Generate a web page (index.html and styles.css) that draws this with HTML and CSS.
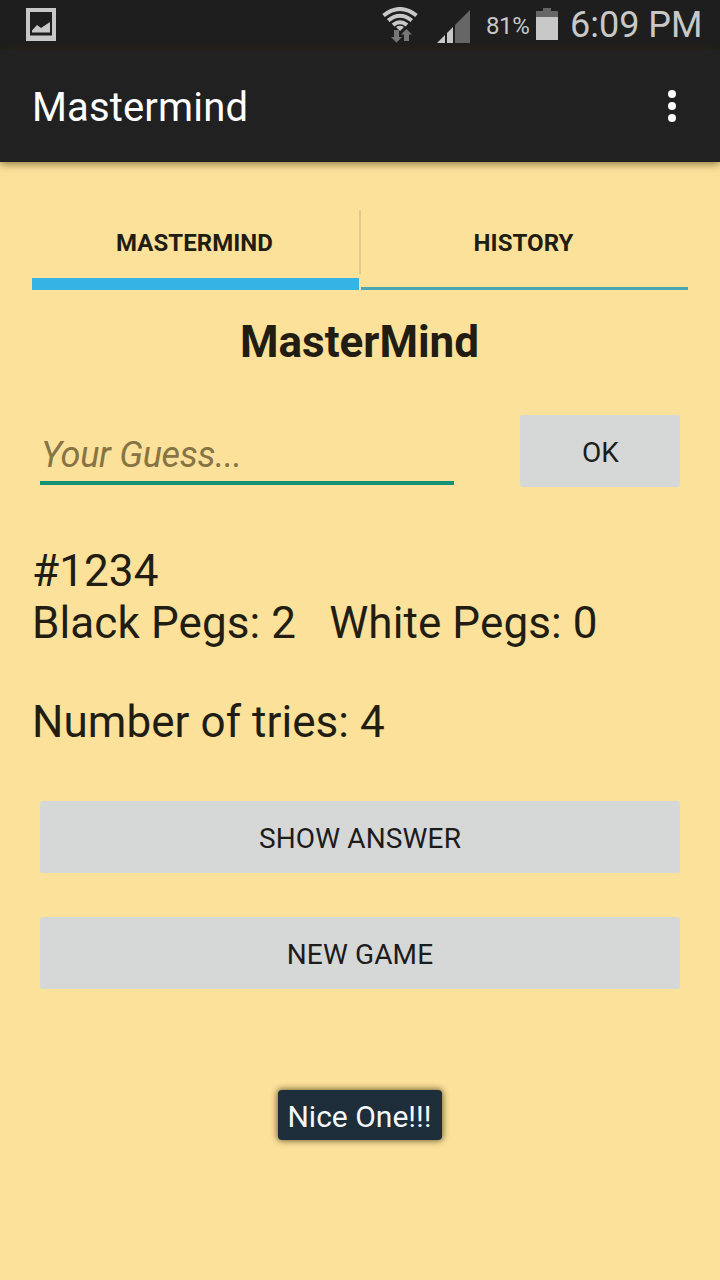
FILE: index.html
```
<!DOCTYPE html>
<html lang="en">
<head>
<meta charset="utf-8">
<title>Mastermind</title>
<link rel="stylesheet" href="styles.css">
</head>
<body>
<div class="screen">
  <div class="status-bar">
    <svg class="icon-picture" width="30" height="34" viewBox="0 0 30 34"><path fill="#c8c8c8" fill-rule="evenodd" d="M0 0H30V33H0ZM4 4V27.500H26V4Z"/><path fill="#c8c8c8" d="M6 24.500V22.500L11 17L15 20L24 14V24.500Z"/></svg>
    <svg class="icon-wifi" width="38" height="36" viewBox="0 0 38 36"><g fill="none" stroke="#c8c8c8" stroke-width="4"><path d="M2.500 8.500Q19 -4.500 35.500 8.500"/><path d="M7.200 13.500Q19 4 30.800 13.500"/><path d="M12 18Q19 12.500 26 18"/></g><path fill="#c8c8c8" d="M15 20Q19 17.500 23 20L19 24Z"/><path fill="#777" d="M13 23H18V30H21L15.500 35.500L10 30H13ZM23 34V27.500H20L25.500 22L31 27.500H28V34Z"/></svg>
    <svg class="icon-signal" width="33" height="34" viewBox="0 0 33 34"><path fill="#666" d="M18 15L33 0V33H18Z"/><path fill="#c8c8c8" d="M0 33L8 25V33ZM10 23L16 17V33H10Z"/></svg>
    <span class="battery-level">81%</span>
    <svg class="icon-battery" width="22" height="32" viewBox="0 0 22 32"><path fill="#666" d="M7 0H15V3H22V9H0V3H7Z"/><path fill="#c8c8c8" d="M0 9H22V32H0Z"/></svg>
    <span class="clock">6:09 PM</span>
  </div>
  <header class="app-bar">
    <h1 class="app-title">Mastermind</h1>
    <svg width="8" height="34" viewBox="0 0 8 34"><g fill="#fff"><circle cx="4" cy="5" r="4"/><circle cx="4" cy="17" r="4"/><circle cx="4" cy="29" r="4"/></g></svg>
  </header>
  <main class="content">
    <nav class="tabs">
      <div class="tab tab-active">MASTERMIND</div>
      <div class="tab-divider"></div>
      <div class="tab">HISTORY</div>
    </nav>
    <h2 class="game-title">MasterMind</h2>
    <div class="guess-row">
      <div class="guess-field">Your Guess...</div>
      <button class="button ok-button">OK</button>
    </div>
    <div class="result">#1234<br>Black Pegs: 2 &nbsp; White Pegs: 0</div>
    <div class="tries">Number of tries: 4</div>
    <button class="button wide-button">SHOW ANSWER</button>
    <button class="button wide-button">NEW GAME</button>
    <div class="toast">Nice One!!!</div>
  </main>
</div>
</body>
</html>
```
FILE: styles.css
```
* { box-sizing: border-box; }
body { margin: 0; }
.screen {
  width: 720px; height: 1280px; overflow: hidden;
  background: #fce19a; color: #211d12;
  font-family: Roboto, "Liberation Sans", sans-serif;
  font-kerning: normal;
}
.status-bar {
  display: flex; align-items: flex-start;
  height: 50px; padding-left: 26px;
  background: #1e1e1e; color: #c8c8c8; white-space: nowrap;
}
.icon-picture { margin-top: 8px; }
.icon-wifi { margin: 7px 0 0 325px; }
.icon-signal { margin: 10px 0 0 18px; }
.battery-level { margin: 12px 0 0 16px; width: 50px; font-size: 24px; line-height: 28px; letter-spacing: -.4px; }
.icon-battery { margin-top: 8px; }
.clock { margin: 4px 0 0 12px; font-size: 36px; line-height: 42px; }
.app-bar {
  position: relative;
  display: flex; align-items: center; justify-content: space-between;
  height: 112px; padding: 0 44px 0 32px;
  background: #212121;
  box-shadow: 0 2px 8px rgba(60, 50, 10, .6);
}
.app-title { margin: 4px 0 0; color: #fff; font-size: 40px; font-weight: 400; line-height: 48px; letter-spacing: .15px; }
.content { display: flex; flex-direction: column; padding: 32px 32px 0; }
.tabs { display: flex; height: 96px; }
.tab {
  flex: 1; display: flex; align-items: center; justify-content: center;
  padding: 4px 2px 0 0;
  border-bottom: 3px solid #4ba6b3;
  font-size: 24px; font-weight: 700; letter-spacing: .05px;
}
.tab-active { border-bottom: 12px solid #33b4e5; padding-top: 13px; }
.tab-divider { width: 2px; height: 64px; margin-top: 16px; background: #e0c98a; }
.game-title { margin: 26px 1px 0 0; text-align: center; font-size: 44px; font-weight: 700; line-height: 52px; }
.guess-row { display: flex; justify-content: space-between; padding: 0 8px; margin-top: 47px; }
.guess-field {
  width: 414px; height: 70px; padding: 19px 0 0 1px;
  border-bottom: 4px solid #159174;
  color: #877445; font-size: 36px; font-style: italic; line-height: 42px; letter-spacing: -.3px;
}
.button {
  height: 72px; padding: 2px 0 0; border: 0; border-radius: 3px;
  background: #d6d7d7; color: #1c1c1c;
  font: 400 28px/33px Roboto, "Liberation Sans", sans-serif;
  letter-spacing: .15px;
}
.ok-button { width: 160px; padding-left: 1px; }
.result { margin-top: 58px; font-size: 44px; line-height: 52px; letter-spacing: .1px; white-space: nowrap; }
.tries { margin-top: 47px; font-size: 44px; line-height: 52px; letter-spacing: .06px; }
.wide-button { margin: 53px 8px 0; }
.wide-button + .wide-button { margin-top: 44px; }
.toast {
  align-self: center; width: 164px; height: 50px; margin: 101px 1px 0 0;
  border-radius: 4px; background: #1d2d3a; color: #f5f8fa;
  box-shadow: 0 0 6px 1px rgba(40, 30, 0, .65);
  text-align: center; font-size: 30px; line-height: 53px;
}
```
